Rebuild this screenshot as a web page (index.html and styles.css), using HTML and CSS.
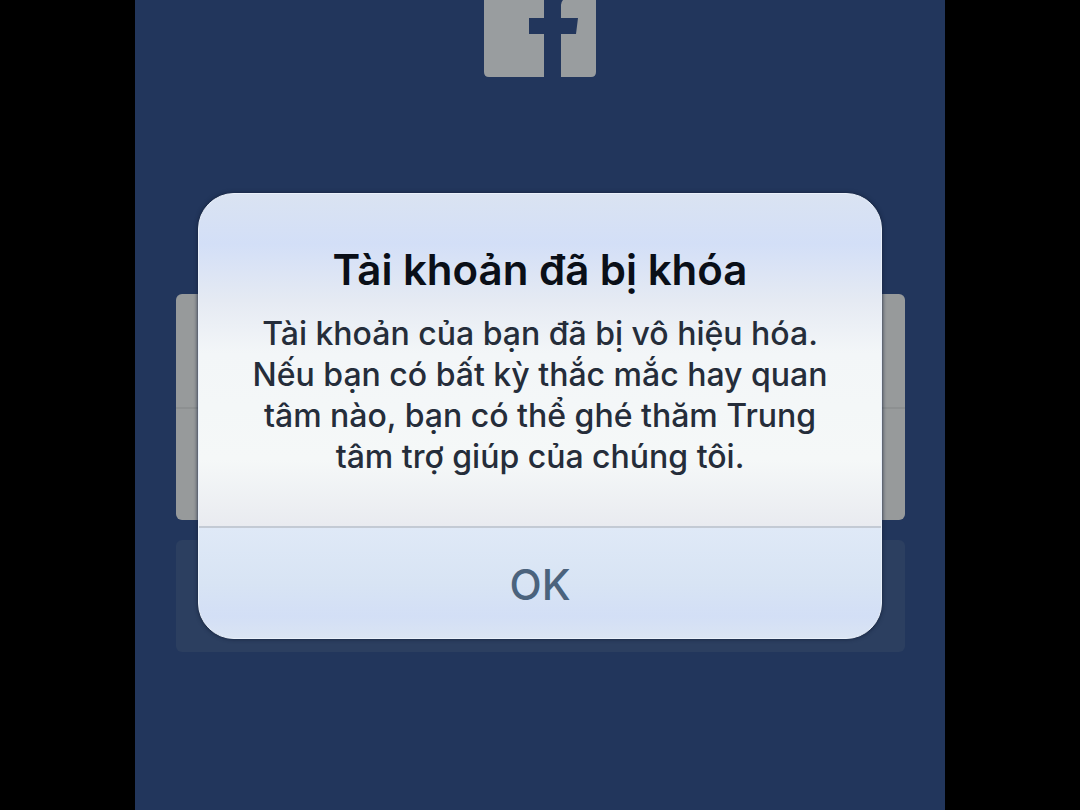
FILE: index.html
```html
<!DOCTYPE html>
<html lang="vi">
<head>
  <meta charset="UTF-8" />
  <meta name="viewport" content="width=device-width, initial-scale=1.0" />
  <title>Tài khoản đã bị khóa</title>
  <link rel="stylesheet" href="styles.css">
</head>
<body>
  <div class="screen">
    <form class="login" inert>
      <svg class="logo" viewBox="0 0 112 77" aria-hidden="true">
        <path d="M0 0H60V18H45V34H60V77H5Q0 77 0 72Z" />
        <path d="M79 0H112V72Q112 77 107 77H77V34H92L94 18H77V5Q77 2 79 0Z" />
      </svg>
      <div class="fields">
        <input type="email" class="field" aria-label="Email">
        <input type="password" class="field" aria-label="Mật khẩu">
      </div>
      <button type="button" class="login-button" aria-label="Đăng nhập"></button>
    </form>

    <div class="overlay">
      <div class="alert" role="alertdialog" aria-labelledby="title" aria-describedby="message">
        <div class="alert-body">
          <h1 id="title">Tài khoản đã bị khóa</h1>
          <p id="message">Tài khoản của bạn đã bị vô hiệu hóa. Nếu bạn có bất kỳ thắc mắc hay quan tâm nào, bạn có thể ghé thăm Trung tâm trợ giúp của chúng tôi.</p>
        </div>
        <button type="button" class="ok">OK</button>
      </div>
    </div>
  </div>
</body>
</html>
```

FILE: styles.css
```css
* {
  box-sizing: border-box;
}
body {
  margin: 0;
  background: #000;
  font-family: Inter, "Liberation Sans", sans-serif;
}
.screen {
  position: relative;
  width: 75%;
  min-height: 100vh;
  margin: 0 auto;
  background: #22365c;
}
.login {
  display: flex;
  flex-direction: column;
  align-items: center;
  padding: 0 5%;
}
.logo {
  width: 112px;
  margin-bottom: 217px;
  fill: #999d9f;
}
.fields {
  width: 100%;
  border-radius: 6px;
  overflow: hidden;
}
.field {
  display: block;
  width: 100%;
  height: 113px;
  border: none;
  background: #979a9b;
}
.field + .field {
  border-top: 2px solid #8d9091;
}
.login-button {
  width: 100%;
  height: 112px;
  margin-top: 20px;
  border: none;
  border-radius: 6px;
  background: #2c3f60;
}
.overlay {
  position: absolute;
  inset: 0;
  display: flex;
  justify-content: center;
  align-items: center;
  padding: 22px 63px 0;
}
.alert {
  width: 100%;
  border: 1px solid #e9f0fa;
  border-radius: 36px;
  background: #e9f0fa;
  overflow: hidden;
  text-align: center;
  box-shadow: 0 0 4px #14213a;
}
.alert-body {
  padding: 50px 48px 49px;
  background: linear-gradient(#dae3f2, #d3dff7 15%, #e5eaf3 32%, #f3f6f8 48%, #f5f8f8 80%, #e9ebf0);
}
h1 {
  margin: 0;
  font-size: 42px;
  font-weight: 600;
  line-height: 52px;
  color: #0a0f18;
}
p {
  margin: 17px 0 0;
  font-size: 32px;
  font-weight: 500;
  line-height: 41px;
  color: #252d3a;
}
.ok {
  display: block;
  width: 100%;
  height: 112px;
  padding: 2px 0 0;
  border: none;
  border-top: 2px solid #c3cad4;
  background: linear-gradient(#dfe9f7, #d8e4f4 50%, #d3dff6 80%, #dae4f3);
  font-family: inherit;
  font-size: 42px;
  font-weight: 500;
  color: #4b637d;
}
```
